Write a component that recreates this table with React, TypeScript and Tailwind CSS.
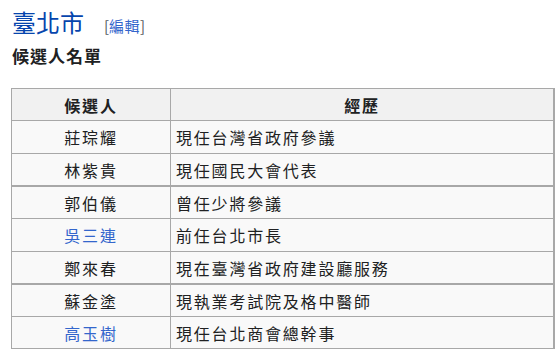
const rows = [
  { name: "莊琮耀", note: "現任台灣省政府參議", link: false, thick: false },
  { name: "林紫貴", note: "現任國民大會代表", link: false, thick: true },
  { name: "郭伯儀", note: "曾任少將參議", link: false, thick: false },
  { name: "吳三連", note: "前任台北市長", link: true, thick: false },
  { name: "鄭來春", note: "現在臺灣省政府建設廳服務", link: false, thick: true },
  { name: "蘇金塗", note: "現執業考試院及格中醫師", link: false, thick: false },
  { name: "高玉樹", note: "現任台北商會總幹事", link: true, thick: false },
];

export default function App() {
  return (
    <div
      className="min-h-screen bg-white text-[#202122] pl-[11px] pt-[4px]"
      style={{ fontFamily: '"Noto Sans CJK TC", "Noto Sans", sans-serif' }}
    >
      <div className="flex items-baseline pl-[1px]">
        <h2 className="text-[24px] leading-[36px] text-[#0645ad]">臺北市</h2>
        <span className="ml-[20px] text-[15px] text-[#54595d]">
          [<a className="text-[#3366cc] tracking-[0.5px]">編輯</a>]
        </span>
      </div>
      <h3 className="pl-[1px] mt-[4px] text-[17px] leading-[24px] font-bold tracking-[1px]">
        候選人名單
      </h3>

      {/* candidate table */}
      <div className="mt-[20px] w-[544px] border-l border-t border-r-2 border-[#a8a8a8] text-[16px] tracking-[1.8px]">
        <div className="grid grid-cols-[159px_1fr] h-[32px] bg-[#f1f1f1] font-bold border-b border-[#a8a8a8]">
          <div className="flex items-center justify-center border-r border-[#a8a8a8]">候選人</div>
          <div className="flex items-center justify-center">經歷</div>
        </div>
        {rows.map((r, i) => (
          <div
            key={r.name}
            className={
              "grid grid-cols-[159px_1fr] bg-[#f9f9f9] border-[#a8a8a8] " +
              (r.thick ? "h-[33px] border-b-2" : i === 2 || i === 5 || i === 6 ? "h-[32px] border-b" : "h-[33px] border-b")
            }
          >
            <div className="flex items-center justify-center border-r border-[#a8a8a8]">
              <span className={r.link ? "text-[#3366cc]" : ""}>{r.name}</span>
            </div>
            <div className="flex items-center pl-[5px]">{r.note}</div>
          </div>
        ))}
      </div>
    </div>
  );
}
